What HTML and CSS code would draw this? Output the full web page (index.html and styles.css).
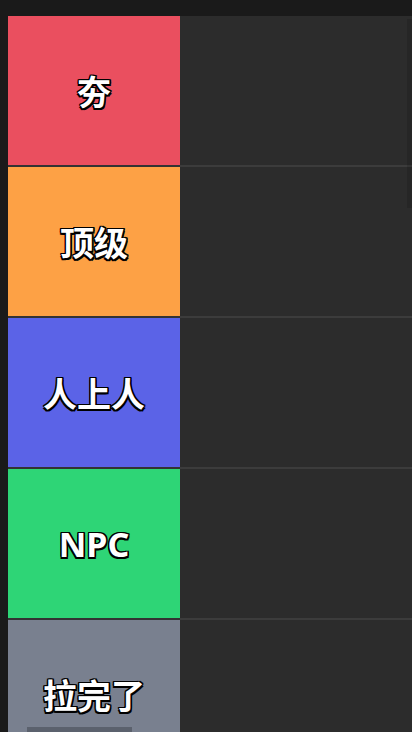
FILE: index.html
```html
<!DOCTYPE html>
<html lang="zh">
<head>
<meta charset="utf-8">
<link rel="stylesheet" href="styles.css">
</head>
<body>
<div class="board">
  <div class="row">
    <div class="label t-s">夯</div>
    <div class="items"></div>
  </div>
  <div class="row">
    <div class="label t-a">顶级</div>
    <div class="items"></div>
  </div>
  <div class="row">
    <div class="label t-b">人上人</div>
    <div class="items"></div>
  </div>
  <div class="row">
    <div class="label t-c">NPC</div>
    <div class="items"></div>
  </div>
  <div class="row">
    <div class="label t-d">拉完了<span class="handle"></span></div>
    <div class="items"></div>
  </div>
  <div class="scroll-thumb"></div>
</div>
</body>
</html>
```
FILE: styles.css
```css
html, body {
  margin: 0;
  padding: 0;
  background: #1a1a1a;
  overflow: hidden;
  height: 732px;
}
body {
  padding: 16px 0 0 8px;
  box-sizing: border-box;
}
.board {
  position: relative;
  width: 404px;
  display: flex;
  flex-direction: column;
  background: #2c2c2c;
}
.row {
  display: flex;
  height: 151px;
}
.label {
  position: relative;
  width: 172px;
  flex: none;
  display: flex;
  align-items: center;
  justify-content: center;
  border-bottom: 2px solid #333333;
  font-family: "Noto Sans", "Noto Sans CJK SC", sans-serif;
  font-weight: 700;
  font-size: 34px;
  color: #ffffff;
  text-shadow:
    -1.2px -1.2px 0 #000, 1.5px -1.2px 0 #000,
    -1.2px 1.5px 0 #000, 1.5px 1.5px 0 #000,
    0 -1.2px 0 #000, 0 1.5px 0 #000,
    -1.2px 0 0 #000, 1.5px 0 0 #000;
}
.items {
  flex: 1;
  background: #2c2c2c;
  border-bottom: 2px solid #3c3c3c;
}
.t-s { background: #ea4f5f; }
.t-a { background: #fda145; }
.t-b { background: #5b63e7; }
.t-c { background: #2ed576; }
.t-d { background: #79808f; }
.handle {
  position: absolute;
  left: 19px;
  top: 107px;
  width: 105px;
  height: 10px;
  background: #5b616d;
}
.scroll-thumb {
  position: absolute;
  right: 0;
  top: 3px;
  width: 5px;
  height: 189px;
  background: rgba(0, 0, 0, 0.12);
}
```
